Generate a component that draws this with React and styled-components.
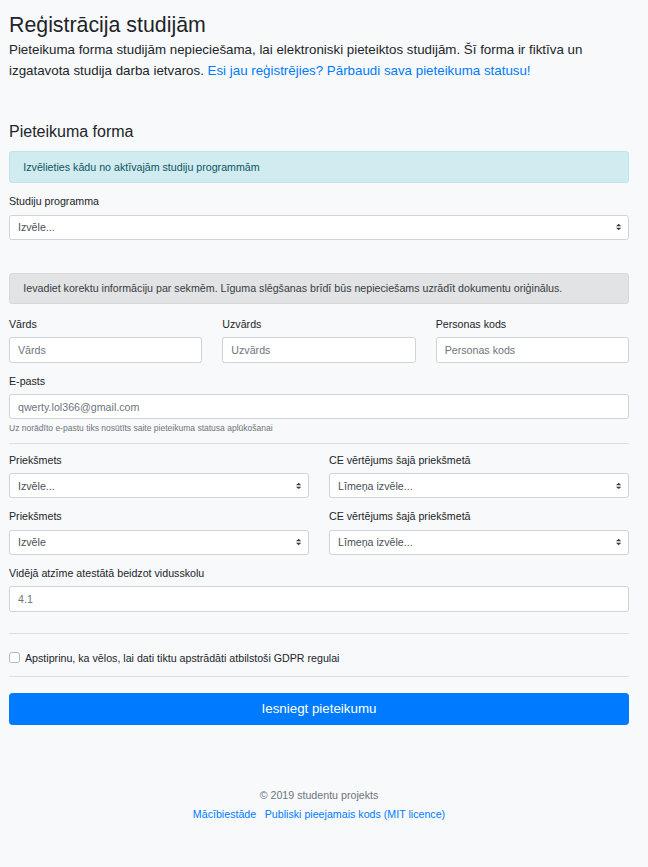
import React from 'react';
import styled, { createGlobalStyle } from 'styled-components';

const GlobalStyle = createGlobalStyle`
  html, body {
    margin: 0;
    padding: 0;
    background: #f8f9fa;
  }
  body {
    font-family: "Liberation Sans", Arial, sans-serif;
    font-size: 10.667px;
    line-height: 1.5;
    color: #212529;
  }
  * { box-sizing: border-box; }
`;

const Page = styled.div`
  width: 620px;
  margin-left: 9px;
  padding-top: 12.5px;
`;

const Title = styled.h2`
  margin: 0 0 2px;
  font-size: 21.33px;
  font-weight: 400;
  line-height: 1.2;
`;

const Lead = styled.p`
  margin: 0 0 10.67px;
  font-size: 13.33px;
  line-height: 20.5px;
`;

const Link = styled.a`
  color: #007bff;
  text-decoration: none;
`;

const SectionTitle = styled.h4`
  margin: 40.5px 0 10.67px;
  font-size: 16px;
  font-weight: 400;
  line-height: 1.2;
`;

const Alert = styled.div`
  padding: 6.67px 13.33px;
  margin-bottom: ${(p) => p.$mb || '10.67px'};
  border: 1px solid ${(p) => (p.$kind === 'info' ? '#bee5eb' : '#d6d8db')};
  border-radius: 2.67px;
  background: ${(p) => (p.$kind === 'info' ? '#d1ecf1' : '#e2e3e5')};
  color: ${(p) => (p.$kind === 'info' ? '#0c5460' : '#383d41')};
  line-height: 16px;
`;

const Group = styled.div`
  margin-bottom: ${(p) => p.$mb || '10px'};
`;

const Row = styled.div`
  display: grid;
  grid-template-columns: repeat(${(p) => p.$cols}, 1fr);
  column-gap: 20px;
`;

const Label = styled.label`
  display: block;
  margin-bottom: 5.33px;
  line-height: 16px;
`;

const Input = styled.input`
  display: block;
  width: 100%;
  height: 25.33px;
  padding: 4px 8px;
  font-family: inherit;
  font-size: 10.667px;
  color: #495057;
  background: #fff;
  border: 1px solid #ced4da;
  border-radius: 2.67px;
  outline: none;

  &::placeholder {
    color: #6c757d;
    opacity: 1;
  }
`;

const SelectWrap = styled.div`
  position: relative;
`;

const Select = styled.select`
  display: block;
  width: 100%;
  height: 25.33px;
  padding: 4px 18px 4px 8px;
  font-family: inherit;
  font-size: 10.667px;
  color: #495057;
  background: #fff;
  border: 1px solid #ced4da;
  border-radius: 2.67px;
  appearance: none;
  outline: none;
`;

const Arrows = styled.svg`
  position: absolute;
  right: 8px;
  top: 50%;
  width: 5.33px;
  height: 6.67px;
  transform: translateY(-50%);
  pointer-events: none;
`;

const Help = styled.small`
  display: block;
  margin-top: 2.67px;
  font-size: 8.53px;
  line-height: 12.8px;
  color: #6c757d;
`;

const Rule = styled.hr`
  margin: ${(p) => p.$mt || '10.67px'} 0 ${(p) => p.$mb || '10.67px'};
  border: 0;
  border-top: 1px solid rgba(0, 0, 0, 0.1);
`;

const Check = styled.label`
  display: flex;
  align-items: flex-start;
  gap: 5.33px;
  line-height: 16px;
`;

const Box = styled.span`
  flex: 0 0 auto;
  width: 10.67px;
  height: 10.67px;
  margin-top: 2.67px;
  background: #fff;
  border: 1px solid #adb5bd;
  border-radius: 2.67px;
`;

const Submit = styled.button`
  display: block;
  width: 100%;
  padding: 5.33px 10.67px;
  font-family: inherit;
  font-size: 13.33px;
  line-height: 20px;
  color: #fff;
  background: #007bff;
  border: 1px solid #007bff;
  border-radius: 3.2px;
`;

const Footer = styled.footer`
  margin-top: 30px;
  padding: 32px 0 32px;
  text-align: center;
  color: #6c757d;
`;

const Copy = styled.p`
  margin: 0 0 2.67px;
`;

const Links = styled.div`
  display: flex;
  justify-content: center;
  gap: 8.5px;
`;

const SelectBox = ({ value }) => (
  <SelectWrap>
    <Select defaultValue={value}>
      <option>{value}</option>
    </Select>
    <Arrows viewBox="0 0 4 5">
      <path fill="#343a40" d="M2 0L0 2h4zm0 5L0 3h4z" />
    </Arrows>
  </SelectWrap>
);

const ChoiceSelect = ({ label, value, mb }) => (
  <Group $mb={mb}>
    <Label>{label}</Label>
    <SelectBox value={value} />
  </Group>
);

const Field = ({ label, placeholder, mb, children }) => (
  <Group $mb={mb}>
    <Label>{label}</Label>
    <Input placeholder={placeholder} />
    {children}
  </Group>
);

const App = () => (
  <>
    <GlobalStyle />
    <Page>
      <Title>Reģistrācija studijām</Title>
      <Lead>
        Pieteikuma forma studijām nepieciešama, lai elektroniski pieteiktos studijām. Šī forma ir fiktīva un
        izgatavota studija darba ietvaros.{' '}
        <Link href="#">Esi jau reģistrējies? Pārbaudi sava pieteikuma statusu!</Link>
      </Lead>

      <SectionTitle>Pieteikuma forma</SectionTitle>
      <Alert $kind="info">Izvēlieties kādu no aktīvajām studiju programmām</Alert>

      <ChoiceSelect label="Studiju programma" value="Izvēle..." mb="32.5px" />

      <Alert $kind="secondary" $mb="12px">
        Ievadiet korektu informāciju par sekmēm. Līguma slēgšanas brīdī būs nepieciešams uzrādīt dokumentu oriģinālus.
      </Alert>

      <Row $cols={3}>
        <Field label="Vārds" placeholder="Vārds" />
        <Field label="Uzvārds" placeholder="Uzvārds" />
        <Field label="Personas kods" placeholder="Personas kods" />
      </Row>

      <Field label="E-pasts" placeholder="qwerty.lol366@gmail.com" mb="8px">
        <Help>Uz norādīto e-pastu tiks nosūtīts saite pieteikuma statusa aplūkošanai</Help>
      </Field>

      <Rule $mt="0" $mb="8px" />

      <Row $cols={2}>
        <ChoiceSelect label="Priekšmets" value="Izvēle..." />
        <ChoiceSelect label="CE vērtējums šajā priekšmetā" value="Līmeņa izvēle..." />
        <ChoiceSelect label="Priekšmets" value="Izvēle" />
        <ChoiceSelect label="CE vērtējums šajā priekšmetā" value="Līmeņa izvēle..." />
      </Row>

      <Field label="Vidējā atzīme atestātā beidzot vidusskolu" placeholder="4.1" mb="0" />

      <Rule $mt="21px" $mb="16px" />

      <Check>
        <Box />
        <span>Apstiprinu, ka vēlos, lai dati tiktu apstrādāti atbilstoši GDPR regulai</span>
      </Check>

      <Rule $mt="10px" $mb="16px" />

      <Submit type="button">Iesniegt pieteikumu</Submit>

      <Footer>
        <Copy>© 2019 studentu projekts</Copy>
        <Links>
          <Link href="#">Mācībiestāde</Link>
          <Link href="#">Publiski pieejamais kods (MIT licence)</Link>
        </Links>
      </Footer>
    </Page>
  </>
);

export default App;
